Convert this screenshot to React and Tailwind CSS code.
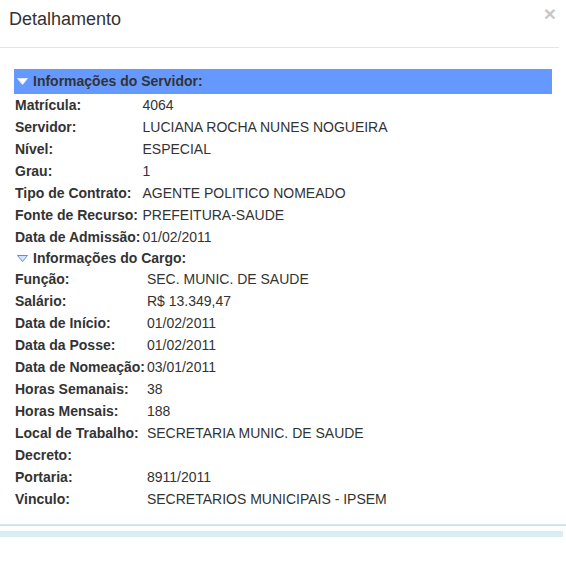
import React from 'react';

const servidor = [
  ['Matrícula:', '4064'],
  ['Servidor:', 'LUCIANA ROCHA NUNES NOGUEIRA'],
  ['Nível:', 'ESPECIAL'],
  ['Grau:', '1'],
  ['Tipo de Contrato:', 'AGENTE POLITICO NOMEADO'],
  ['Fonte de Recurso:', 'PREFEITURA-SAUDE'],
  ['Data de Admissão:', '01/02/2011'],
];

const cargo = [
  ['Função:', 'SEC. MUNIC. DE SAUDE'],
  ['Salário:', 'R$ 13.349,47'],
  ['Data de Início:', '01/02/2011'],
  ['Data da Posse:', '01/02/2011'],
  ['Data de Nomeação:', '03/01/2011'],
  ['Horas Semanais:', '38'],
  ['Horas Mensais:', '188'],
  ['Local de Trabalho:', 'SECRETARIA MUNIC. DE SAUDE'],
  ['Decreto:', ''],
  ['Portaria:', '8911/2011'],
  ['Vinculo:', 'SECRETARIOS MUNICIPAIS - IPSEM'],
];

function Rows({ items }) {
  return (
    <div className="grid grid-cols-[auto_1fr] gap-x-[2px]">
      {items.map(([label, value]) => (
        <React.Fragment key={label}>
          <div className="h-[22px] flex items-center pl-[1px] font-bold">{label}</div>
          <div className="h-[22px] flex items-center">{value}</div>
        </React.Fragment>
      ))}
    </div>
  );
}

export default function App() {
  return (
    <div className="w-[566px] h-[566px] bg-white text-[#333] font-['Liberation_Sans',Arial,sans-serif] text-[14px]">
      <div className="w-[559px] h-[48px] border-b border-[#e5e5e5] flex justify-between pl-[9px] pr-[3px]">
        <h4 className="text-[18px] leading-[20px] pt-[9px]">Detalhamento</h4>
        <span className="text-[#c8c8c8] font-bold text-[21px] leading-[20px] pt-[4px]">×</span>
      </div>

      <div className="px-[14px] pt-[21px] pb-[14px] border-b-2 border-[#cfe6ec]">
        <div className="h-[25px] bg-[#6699ff] flex items-center pl-[3px] gap-[5px] font-bold">
          <svg width="11" height="7" viewBox="0 0 11 7">
            <path d="M0.5 0.5 L10.5 0.5 L5.5 6.5 Z" fill="#ffffff" stroke="#dde8ff" />
          </svg>
          <span>Informações do Servidor:</span>
        </div>
        <Rows items={servidor} />
        <div className="h-[20px] flex items-center pl-[3px] gap-[5px] font-bold">
          <svg width="11" height="7" viewBox="0 0 11 7">
            <path d="M0.5 0.5 L10.5 0.5 L5.5 6.5 Z" fill="#d6e4ff" stroke="#5b8fe6" />
          </svg>
          <span>Informações do Cargo:</span>
        </div>
        <Rows items={cargo} />
      </div>

      <div className="mt-[5px] w-[563px] h-[6px] bg-[#d9edf4]"></div>
    </div>
  );
}
